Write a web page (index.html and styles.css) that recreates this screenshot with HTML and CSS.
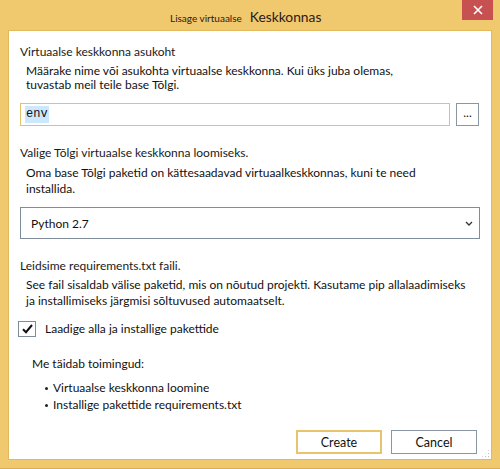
FILE: index.html
```html
<!DOCTYPE html>
<html lang="et">
<head>
<meta charset="utf-8">
<title>Lisage virtuaalse Keskkonnas</title>
<link rel="stylesheet" href="styles.css">
</head>
<body>
<div class="window">
  <div class="titlebar">
    <div class="title"><span class="title-small">Lisage virtuaalse</span><span class="title-big">Keskkonnas</span></div>
    <button class="close" aria-label="Close">
      <svg width="10" height="10" viewBox="0 0 10 10"><path d="M1 1L9 9M9 1L1 9" stroke="#fff" stroke-width="1.6"/></svg>
    </button>
  </div>
  <div class="content">
    <div class="section s1">
      <div class="heading">Virtuaalse keskkonna asukoht</div>
      <div class="desc tight">Määrake nime või asukohta virtuaalse keskkonna. Kui üks juba olemas,<br>tuvastab meil teile base Tõlgi.</div>
      <div class="path-row">
        <div class="text-input"><span class="sel">env</span></div>
        <button class="browse">...</button>
      </div>
    </div>
    <div class="section s2">
      <div class="heading">Valige Tõlgi virtuaalse keskkonna loomiseks.</div>
      <div class="desc">Oma base Tõlgi paketid on kättesaadavad virtuaalkeskkonnas, kuni te need<br>installida.</div>
      <div class="select">
        <span>Python 2.7</span>
        <svg class="chev" width="8" height="5" viewBox="0 0 8 5"><path d="M1 1L4 4L7 1" fill="none" stroke="#333" stroke-width="1.3"/></svg>
      </div>
    </div>
    <div class="section s3">
      <div class="heading">Leidsime requirements.txt faili.</div>
      <div class="desc">See fail sisaldab välise paketid, mis on nõutud projekti. Kasutame pip allalaadimiseks<br>ja installimiseks järgmisi sõltuvused automaatselt.</div>
      <label class="check-row">
        <span class="checkbox">
          <svg width="11" height="10" viewBox="0 0 11 10"><path d="M1 5.2L4 8.2L10 1" fill="none" stroke="#111" stroke-width="2"/></svg>
        </span>
        <span class="check-label">Laadige alla ja installige pakettide</span>
      </label>
      <div class="actions-title">Me täidab toimingud:</div>
      <ul class="actions">
        <li>Virtuaalse keskkonna loomine</li>
        <li>Installige pakettide requirements.txt</li>
      </ul>
    </div>
    <div class="buttons">
      <button class="btn primary">Create</button>
      <button class="btn">Cancel</button>
    </div>
    <div class="grip"></div>
  </div>
</div>
</body>
</html>
```

FILE: styles.css
```css
* { box-sizing: border-box; }
html, body { margin: 0; padding: 0; }
body {
  width: 500px;
  height: 469px;
  overflow: hidden;
  font-family: Lato, "Liberation Sans", Arial, sans-serif;
  font-size: 12px;
  color: #111;
}
.window {
  width: 500px;
  height: 469px;
  background: #f0c86e;
  display: flex;
  flex-direction: column;
  border-bottom: 1px solid #d9ae52;
}
.titlebar {
  height: 30px;
  position: relative;
  flex: none;
}
.title {
  position: absolute;
  left: 170px;
  top: 8px;
  display: flex;
  align-items: baseline;
  color: #2a1a1a;
}
.title-small { font-size: 10px; margin-right: 8px; }
.title-big { font-size: 13.8px; }
.close {
  position: absolute;
  right: 7px;
  top: 0;
  width: 31px;
  height: 20px;
  border: 0;
  padding: 0;
  background: #c75050;
  display: flex;
  align-items: center;
  justify-content: center;
}
.content {
  margin: 0 8px;
  height: 430px;
  background: #fff;
  border: 1px solid #e2b95c;
  position: relative;
  padding: 13px 12px 0 11px;
  display: flex;
  flex-direction: column;
}
.heading {
  line-height: 16px;
  color: #1a1a1a;
}
.desc {
  line-height: 16px;
  margin: 4px 0 0 6px;
  color: #111;
}
.desc.tight { line-height: 14px; margin-top: 4px; }
.path-row {
  display: flex;
  margin-top: 11px;
  gap: 6px;
}
.text-input {
  width: 431px;
  height: 23px;
  border: 1px solid #e5c168;
  padding: 2px 0 0 4px;
  font-family: "Liberation Mono", monospace;
  font-size: 12px;
  line-height: 17px;
}
.sel { background: #cce8ff; display: inline-block; padding: 0 1px; }
.browse {
  width: 23px;
  height: 23px;
  border: 1px solid #8a96a3;
  background: #fff;
  font-family: Lato, "Liberation Sans", Arial, sans-serif;
  font-size: 12px;
  padding: 0 0 4px;
  color: #111;
}
.s2 { margin-top: 19px; }
.select {
  margin-top: 10px;
  width: 460px;
  height: 32px;
  border: 1px solid #7f8c9a;
  display: flex;
  align-items: center;
  justify-content: space-between;
  padding: 0 6px 0 10px;
}
.s3 { margin-top: 19px; }
.s3 .desc { margin-top: 3px; }
.check-row {
  display: flex;
  align-items: center;
  margin-top: 12px;
  margin-left: -2px;
}
.checkbox {
  width: 18px;
  height: 16px;
  border: 1px solid #7f8c9a;
  display: flex;
  align-items: center;
  justify-content: center;
}
.check-label { margin-left: 9px; line-height: 16px; }
.actions-title {
  margin: 19px 0 0 12px;
  line-height: 16px;
}
.actions {
  margin: 8px 0 0 25px;
  padding: 0 0 0 8px;
  line-height: 16.5px;
  list-style: none;
}
.actions li { position: relative; }
.actions li::before {
  content: "";
  position: absolute;
  left: -8px;
  top: 7px;
  width: 3px;
  height: 3px;
  border-radius: 50%;
  background: #222;
}
.buttons {
  margin-top: auto;
  margin-bottom: 5px;
  display: flex;
  justify-content: flex-end;
  gap: 9px;
  padding-right: 2px;
}
.btn {
  width: 86px;
  height: 24px;
  background: #fff;
  border: 1px solid #8a96a3;
  font-family: Lato, "Liberation Sans", Arial, sans-serif;
  font-size: 12.5px;
  color: #111;
  padding: 0;
}
.btn.primary { border: 2px solid #e8c46c; }
.grip {
  position: absolute;
  right: 1px;
  bottom: 1px;
  width: 9px;
  height: 9px;
  background-image: radial-gradient(circle, #b8bcc2 0.8px, transparent 1px);
  background-size: 3px 3px;
  clip-path: polygon(100% 0, 100% 100%, 0 100%);
}
```
